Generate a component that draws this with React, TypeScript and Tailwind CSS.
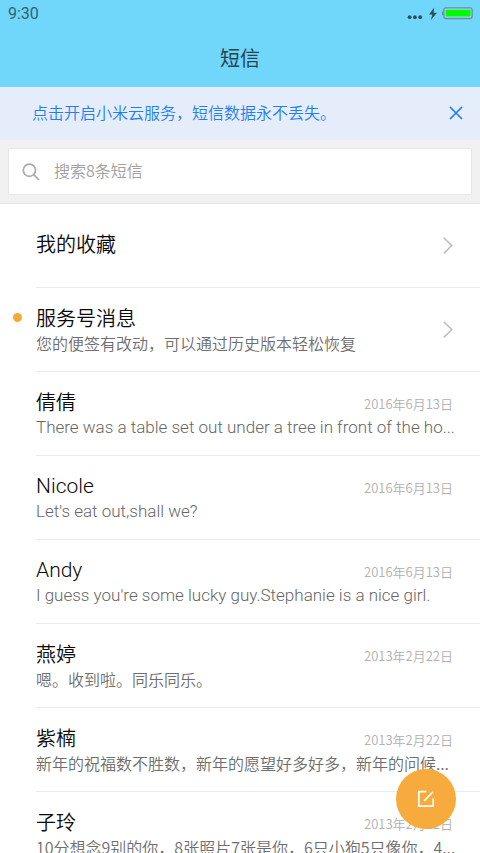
import { useState } from 'react'

type Thread = {
  name: string
  preview: string
  date?: string
  unread?: boolean
}

const threads: Thread[] = [
  { name: '服务号消息', preview: '您的便签有改动，可以通过历史版本轻松恢复', unread: true },
  { name: '倩倩', preview: 'There was a table set out under a tree in front of the ho...', date: '2016年6月13日' },
  { name: 'Nicole', preview: "Let's eat out,shall we?", date: '2016年6月13日' },
  { name: 'Andy', preview: "I guess you're some lucky guy.Stephanie is a nice girl.", date: '2016年6月13日' },
  { name: '燕婷', preview: '嗯。收到啦。同乐同乐。', date: '2013年2月22日' },
  { name: '紫楠', preview: '新年的祝福数不胜数，新年的愿望好多好多，新年的问候...', date: '2013年2月22日' },
  { name: '子玲', preview: '10分想念9别的你，8张照片7张是你，6只小狗5只像你，4...', date: '2013年2月22日' },
]

// latin-only strings use Roboto a step larger, everything with hanzi keeps the CJK face
const isLatin = (text: string) => /^[\x20-\x7e]+$/.test(text)
const latinFont = "font-['Roboto','Noto_Sans_CJK_SC',sans-serif] font-light"

function Chevron() {
  return (
    <svg width="10" height="18" viewBox="0 0 10 18" fill="none" stroke="#bdbdbd" strokeWidth="1.5" className="shrink-0" aria-hidden="true">
      <path d="M0.8 0.8 8.8 8.6 0.8 16.4" />
    </svg>
  )
}

function StatusBar() {
  return (
    <div className="flex h-7 items-center justify-between pl-2 pr-[7px]">
      <span className="font-['Roboto',sans-serif] text-base font-normal text-[#36606f]">9:30</span>
      <svg width="66" height="14" viewBox="0 0 66 14" aria-hidden="true">
        <g fill="#2b4c58">
          <circle cx="2.6" cy="10.2" r="1.9" />
          <circle cx="7.9" cy="10.2" r="1.9" />
          <circle cx="13.2" cy="10.2" r="1.9" />
          <path d="M27.2 0.4 22 7.4H25.4L23.8 13 30 5.8H26.6Z" />
        </g>
        <rect x="35" y="4.4" width="2" height="3.8" rx="0.8" fill="#6d8c97" />
        <rect x="36.9" y="0.9" width="28.2" height="10.6" rx="1.8" fill="#8fdcf5" stroke="#6d8c97" strokeWidth="1.3" />
        <rect x="38.7" y="2.8" width="24.8" height="6.8" rx="0.8" fill="#00fb00" />
      </svg>
    </div>
  )
}

function ThreadRow({ thread }: { thread: Thread }) {
  return (
    <li>
      <a href="#" className="relative block pl-9">
        {thread.unread && <span className="absolute left-[13px] top-[25px] size-[9px] rounded-full bg-[#f7a935]" />}
        <div className="flex h-21 items-center border-b border-[#ebebeb] pr-[27px]">
          <div className="min-w-0 flex-1">
            <div className="flex h-[26px] items-center justify-between">
              <span className={isLatin(thread.name) ? `text-[21px] leading-[26px] text-[#0a0a0a] ${latinFont}` : 'text-xl leading-[26px] text-[#0a0a0a]'}>
                {thread.name}
              </span>
              {thread.date && <time className="pt-1 text-[13px] leading-6 text-[#b0b0b0]">{thread.date}</time>}
            </div>
            <p
              className={
                isLatin(thread.preview)
                  ? `whitespace-nowrap text-[17px] leading-6 text-[#666666] ${latinFont}`
                  : 'whitespace-nowrap text-base leading-6 text-[#6e6e6e]'
              }
            >
              {thread.preview}
            </p>
          </div>
          {!thread.date && <Chevron />}
        </div>
      </a>
    </li>
  )
}

export default function App() {
  const [bannerOpen, setBannerOpen] = useState(true)

  return (
    <div className="flex h-screen flex-col overflow-hidden bg-white font-['Noto_Sans_CJK_SC',sans-serif] font-[350]">
      <header className="h-[87px] shrink-0 bg-[#70d7fb]">
        <StatusBar />
        <h1 className="pt-4 text-center text-xl leading-7 font-normal text-[#26434e]">短信</h1>
      </header>

      {bannerOpen && (
        <div className="flex h-[53px] shrink-0 items-center justify-between bg-[#e5edfb] pl-8 pr-[17px] text-base text-[#1e7ff5]">
          <a href="#" className="pb-[3px]">点击开启小米云服务，短信数据永不丢失。</a>
          <button type="button" aria-label="关闭" className="pb-px" onClick={() => setBannerOpen(false)}>
            <svg width="14" height="14" viewBox="0 0 14 14" fill="none" stroke="currentColor" strokeWidth="1.7">
              <path d="M1 1 13 13M13 1 1 13" />
            </svg>
          </button>
        </div>
      )}

      <div className="shrink-0 border-b border-[#e6e6e6] bg-[#f1f1f1] p-2">
        <label className="flex h-[47px] items-center gap-[14px] border border-[#e8e8e8] bg-white pl-[13px]">
          <svg width="18" height="18" viewBox="0 0 18 18" fill="none" stroke="#aaaaaa" strokeWidth="1.7" aria-hidden="true">
            <circle cx="7.4" cy="7.2" r="6.1" />
            <path d="M11.8 11.6 17 17" />
          </svg>
          <input
            type="search"
            aria-label="搜索短信"
            placeholder="搜索8条短信"
            className="min-w-0 flex-1 bg-transparent pb-[3px] text-base outline-none placeholder:text-[#a0a0a0]"
          />
        </label>
      </div>

      <ul className="min-h-0 flex-1 overflow-hidden">
        <li>
          <a href="#" className="block pl-9">
            <div className="flex h-21 items-center justify-between border-b border-[#ebebeb] pr-[27px]">
              <span className="pb-[3px] text-xl leading-[26px] text-[#0a0a0a]">我的收藏</span>
              <Chevron />
            </div>
          </a>
        </li>
        {threads.map(thread => (
          <ThreadRow key={thread.name} thread={thread} />
        ))}
      </ul>

      <button
        type="button"
        aria-label="新建短信"
        className="fixed bottom-6 right-6 flex size-15 items-center justify-center rounded-full bg-[#f6ab3c]"
      >
        <svg width="18" height="18" viewBox="0 0 18 18" fill="none" stroke="#ffffff" strokeWidth="1.7" aria-hidden="true">
          <path d="M9.4 1.6H1.8V16.2H16.2V8.6" />
          <path d="M7.2 10.8 15.8 2" />
        </svg>
      </button>
    </div>
  )
}
